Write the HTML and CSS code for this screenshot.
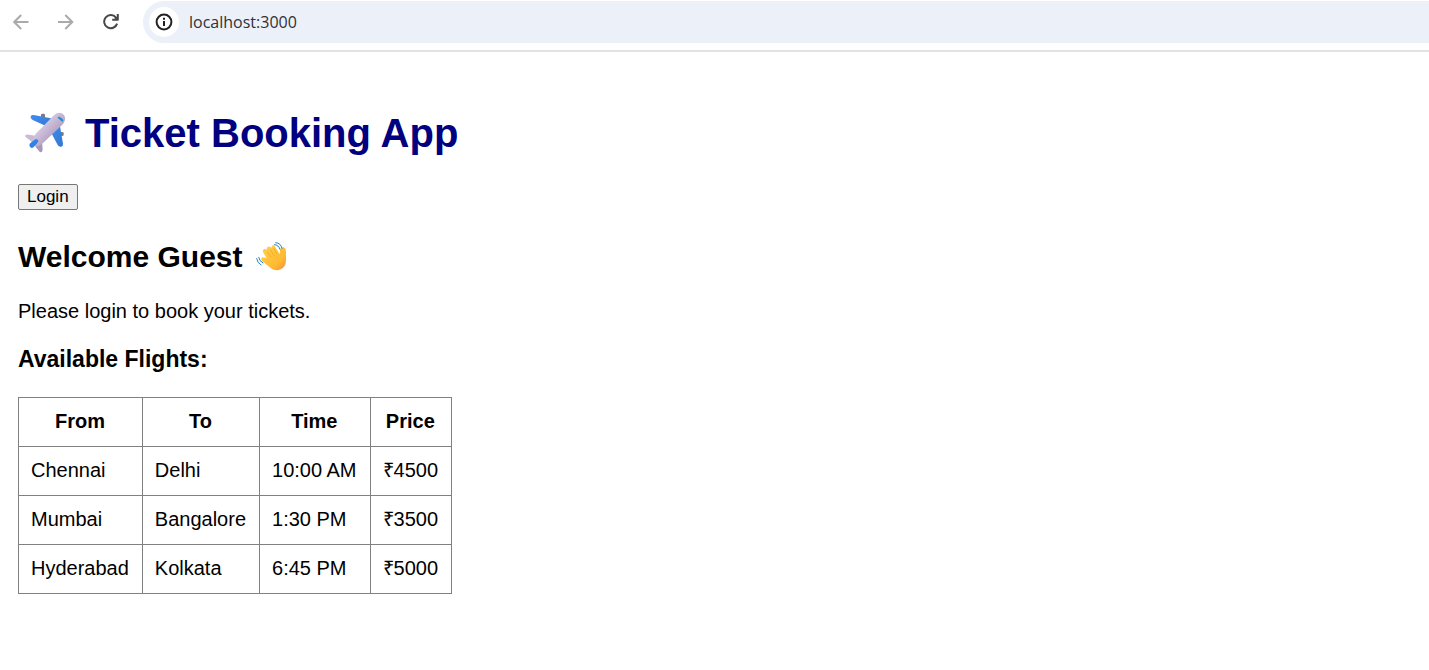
FILE: index.html
```html
<!DOCTYPE html>
<html lang="en">
<head>
<meta charset="utf-8">
<title>Ticket Booking App</title>
<link rel="stylesheet" href="styles.css">
</head>
<body>
<header class="toolbar">
  <button class="nav nav-off" type="button" aria-label="Back">
    <svg width="16" height="16" viewBox="0 0 16 16"><path d="M15.5 8H1.5M8.2 1L1.2 8l7 7"/></svg>
  </button>
  <button class="nav nav-off" type="button" aria-label="Forward">
    <svg width="16" height="16" viewBox="0 0 16 16"><path d="M0 8h14M7.3 1l7 7-7 7"/></svg>
  </button>
  <button class="nav" type="button" aria-label="Reload">
    <svg width="16" height="16" viewBox="0 0 16 16"><path d="M13 3.6A6.6 6.6 0 1 0 14.1 9.6M9.2 5.7H15M14.8 0v6.6M12 3l2 2"/></svg>
  </button>
  <div class="address">
    <button class="info" type="button" aria-label="Site information">
      <svg width="18" height="18" viewBox="0 0 18 18"><circle cx="9" cy="9" r="7.4"/><path d="M9 8v5M9 4.7v2"/></svg>
    </button>
    <input class="url" type="text" value="localhost:3000" aria-label="Address">
  </div>
</header>
<main class="page">
  <h1 class="title">
    <svg class="plane" viewBox="11 36 168 126" aria-hidden="true">
      <defs>
        <linearGradient id="body" x1="0" y1="0" x2="1" y2="1"><stop offset="0.3" stop-color="#d8cbe3"/><stop offset="0.75" stop-color="#ab98bd"/></linearGradient>
        <linearGradient id="wing" x1="0" y1="0" x2="1" y2="1"><stop offset="0" stop-color="#3e8df0"/><stop offset="1" stop-color="#3477d2"/></linearGradient>
      </defs>
      <rect x="80" y="41" width="12" height="13" rx="4" fill="#7b7b83"/>
      <rect x="135" y="96" width="13" height="12" rx="4" fill="#7b7b83"/>
      <path d="M49 49q3-5 9-4l60 11-18 24-45-20q-8-5-6-11z" fill="url(#wing)"/>
      <path d="M136 73l10 58q1 7-5 9-7 2-11-5l-21-40z" fill="url(#wing)"/>
      <path d="M34 105q4-3 10-1l20 3-8 21-22-17q-3-3 0-6z" fill="#c9bbd6"/>
      <path d="M64 135l19-14 2 29q-1 8-8 7l-13-16z" fill="#a997bb"/>
      <path d="M63 103L117 47q12-12 25-7 12 6 10 20-2 8-9 15l-56 53q-12 12-24 11-7-1-7-11 0-13 7-25z" fill="url(#body)"/>
      <path d="M46 139q-3-7 5-12l12-9q8-2 9 4 0 5-13 18-8 8-13-1z" fill="#2f82ea"/>
      <path d="M130 51l5-1 9 6 3 5-2 4-5-3-8-7z" fill="#168fdb"/>
    </svg>
    <span>Ticket Booking App</span>
  </h1>
  <button class="login" type="button">Login</button>
  <h2 class="welcome">
    <span>Welcome Guest</span>
    <svg class="wave" viewBox="3 12 120 102" aria-hidden="true">
      <defs>
        <linearGradient id="hand" x1="0" y1="0" x2="1" y2="1"><stop offset="0.2" stop-color="#ffcb45"/><stop offset="0.7" stop-color="#ffb931"/><stop offset="1" stop-color="#ef8d42"/></linearGradient>
      </defs>
      <path d="M36 75q-5-7 1-11l13 2-10-16q-4-8 3-11 5-1 8 4-3-9 4-11 5-2 9 4 0-7 5-8 5 0 8 7l12 20 1-12q2-10 10-9 8 2 8 12v29q-1 18-16 25-16 7-29-3-6-5-27-22z" fill="url(#hand)"/>
      <path d="M51 46l13 19M61 40l12 21M72 37l9 18" fill="none" stroke="#eda126" stroke-width="2"/>
      <path d="M73 26q13 0 17 14M77 20q16 1 19 17M26 64q2 12 13 17M20 68q2 13 13 19" fill="none" stroke="#1d83c6" stroke-width="3" stroke-linecap="round"/>
    </svg>
  </h2>
  <p class="hint">Please login to book your tickets.</p>
  <h3 class="subtitle" id="flights">Available Flights:</h3>
  <table class="flights" aria-labelledby="flights">
    <thead>
      <tr><th scope="col">From</th><th scope="col">To</th><th scope="col">Time</th><th scope="col">Price</th></tr>
    </thead>
    <tbody>
      <tr><td>Chennai</td><td>Delhi</td><td>10:00 AM</td><td>₹4500</td></tr>
      <tr><td>Mumbai</td><td>Bangalore</td><td>1:30 PM</td><td>₹3500</td></tr>
      <tr><td>Hyderabad</td><td>Kolkata</td><td>6:45 PM</td><td>₹5000</td></tr>
    </tbody>
  </table>
</main>
</body>
</html>
```
FILE: styles.css
```css
* {
  box-sizing: border-box;
}

body {
  margin: 0;
  background: #fff;
  color: #000;
  font: 20px/24px "Liberation Sans", Arial, sans-serif;
}

.toolbar {
  display: flex;
  align-items: flex-start;
  padding: 1px 0 7px 6px;
  border-bottom: 2px solid #e2e2e2;
}

.nav {
  display: flex;
  align-items: center;
  justify-content: center;
  width: 29px;
  height: 42px;
  margin-right: 16px;
  padding: 0;
  border: 0;
  background: none;
}

.nav svg {
  fill: none;
  stroke: #474747;
  stroke-width: 2;
}

.nav-off svg {
  stroke: #aaa;
}

.address {
  display: flex;
  flex: 1;
  align-items: center;
  height: 42px;
  margin-left: 2px;
  padding-left: 6px;
  border-radius: 21px 0 0 21px;
  background: #ecf0f9;
}

.info {
  display: flex;
  align-items: center;
  justify-content: center;
  width: 30px;
  height: 30px;
  padding: 0;
  border: 0;
  border-radius: 50%;
  background: #fff;
}

.info svg {
  fill: none;
  stroke: #222;
  stroke-width: 2;
}

.url {
  flex: 1;
  min-width: 0;
  margin-left: 10px;
  padding: 0;
  border: 0;
  background: none;
  color: #303134;
  font: 16px/24px "Open Sans", "Noto Sans", sans-serif;
}

.page {
  padding: 58px 18px 24px;
}

.title {
  display: flex;
  align-items: center;
  gap: 11px;
  margin: 0 0 28px;
  color: navy;
  font-size: 40px;
  line-height: 46px;
}

.plane {
  width: 56px;
  height: 42px;
}

.login {
  display: block;
  height: 26px;
  padding: 0 8px;
  border: 1px solid #767676;
  border-radius: 2px;
  background: #efefef;
  color: #000;
  font: 17px/22px "Liberation Sans", Arial, sans-serif;
}

.welcome {
  display: flex;
  align-items: center;
  gap: 8px;
  margin: 30px 0 25px;
  font-size: 30px;
  line-height: 34px;
}

.wave {
  width: 40px;
  height: 34px;
}

.hint {
  margin: 0 0 22px;
}

.subtitle {
  margin: 0 0 24px;
  font-size: 23px;
  line-height: 28px;
}

.flights {
  border-collapse: collapse;
}

.flights th,
.flights td {
  padding: 11px 13px 13px 12px;
  border: 1px solid gray;
}
```
